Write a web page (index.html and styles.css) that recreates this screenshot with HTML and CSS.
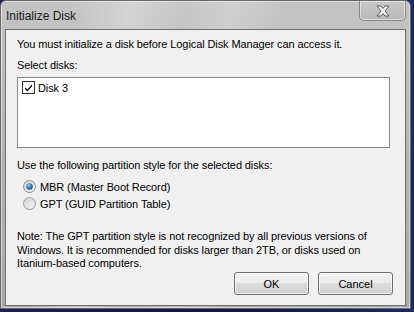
FILE: index.html
```html
<!DOCTYPE html>
<html>
<head>
<meta charset="utf-8">
<link rel="stylesheet" href="styles.css">
</head>
<body>
<div class="window">
  <div class="titlebar">
    <span class="title">Initialize Disk</span>
    <div class="close">
      <svg width="20" height="14" viewBox="0 0 20 14">
        <path d="M4 2 L8 2 L10 4.5 L12 2 L16 2 L12 7 L16 12 L12 12 L10 9.5 L8 12 L4 12 L8 7 Z" fill="#f4f4f4" stroke="#5a5a5a" stroke-width="1" stroke-linejoin="round"/>
      </svg>
    </div>
  </div>
  <div class="client">
    <p class="intro">You must initialize a disk before Logical Disk Manager can access it.</p>
    <p class="label">Select disks:</p>
    <div class="listbox">
      <div class="item">
        <svg class="check" width="13" height="13" viewBox="0 0 13 13">
          <rect x="0.5" y="0.5" width="12" height="12" fill="#fff" stroke="#333"/>
          <path d="M3 6.2 L5.3 8.6 L10 3.4 L10 5.4 L5.3 10.6 L3 8.2 Z" fill="#111"/>
        </svg>
        <span>Disk 3</span>
      </div>
    </div>
    <p class="label style">Use the following partition style for the selected disks:</p>
    <div class="radios">
      <div class="radio">
        <svg width="13" height="13" viewBox="0 0 13 13">
          <defs>
            <radialGradient id="dot" cx="0.4" cy="0.35" r="0.7">
              <stop offset="0" stop-color="#9fd3f5"/>
              <stop offset="0.6" stop-color="#2a74b4"/>
              <stop offset="1" stop-color="#163f6a"/>
            </radialGradient>
            <linearGradient id="ring" x1="0" y1="0" x2="1" y2="1">
              <stop offset="0" stop-color="#d6d6d6"/>
              <stop offset="1" stop-color="#f6f6f6"/>
            </linearGradient>
          </defs>
          <circle cx="6.5" cy="6.5" r="6" fill="url(#ring)" stroke="#8c8c8c"/>
          <circle cx="6.5" cy="6.5" r="3.3" fill="url(#dot)"/>
        </svg>
        <span>MBR (Master Boot Record)</span>
      </div>
      <div class="radio">
        <svg width="13" height="13" viewBox="0 0 13 13">
          <defs>
            <linearGradient id="ring2" x1="0" y1="0" x2="1" y2="1">
              <stop offset="0" stop-color="#d2d2d2"/>
              <stop offset="1" stop-color="#f4f4f4"/>
            </linearGradient>
          </defs>
          <circle cx="6.5" cy="6.5" r="6" fill="url(#ring2)" stroke="#9a9a9a"/>
        </svg>
        <span>GPT (GUID Partition Table)</span>
      </div>
    </div>
    <p class="note">Note: The GPT partition style is not recognized by all previous versions of Windows. It is recommended for disks larger than 2TB, or disks used on Itanium-based computers.</p>
    <div class="buttons">
      <button class="btn">OK</button>
      <button class="btn">Cancel</button>
    </div>
  </div>
</div>
</body>
</html>
```
FILE: styles.css
```css
* { box-sizing: border-box; }
html, body { margin: 0; padding: 0; }
body {
  width: 414px;
  height: 312px;
  background: linear-gradient(90deg, #1b1f5e, #101347 60%, #1a2a70);
  overflow: hidden;
  font-family: "Liberation Sans", Arial, sans-serif;
  font-size: 11px;
  letter-spacing: -0.1px;
  color: #000;
}
.window {
  width: 411px;
  height: 309px;
  border: 1px solid #6a6a6a;
  border-radius: 6px 6px 0 0;
  background:
    linear-gradient(100deg, rgba(255,255,255,0) 15%, rgba(255,255,255,0.28) 28%, rgba(255,255,255,0.05) 40%, rgba(255,255,255,0.22) 50%, rgba(255,255,255,0) 62%),
    linear-gradient(180deg, #c4c4c4 0%, #b6b6b6 40%, #a8a8a8 100%);
  display: flex;
  flex-direction: column;
  box-shadow: inset 0 0 0 1px rgba(255,255,255,0.45);
}
.titlebar {
  height: 28px;
  display: flex;
  align-items: flex-start;
  padding-left: 5px;
}
.title {
  font-size: 12px;
  letter-spacing: 0;
  line-height: 14px;
  margin-top: 8px;
  color: #1a1a1a;
}
.close {
  margin-left: auto;
  margin-right: 4px;
  width: 47px;
  height: 20px;
  border: 1px solid #8a8a8a;
  border-top: none;
  border-radius: 0 0 5px 5px;
  background: linear-gradient(180deg, #c8c8c8, #b9b9b9);
  box-shadow: inset 0 0 0 1px rgba(255,255,255,0.5);
  display: flex;
  align-items: center;
  justify-content: center;
}
.client {
  flex: 1;
  margin: 0 4px 2px 4px;
  border: 1px solid #707070;
  background: #f0f0f0;
  padding: 7px 12px 0 11px;
  display: flex;
  flex-direction: column;
}
p { margin: 0; line-height: 15px; }
.label { margin-top: 6px; }
.listbox {
  margin-top: 4px;
  height: 71px;
  width: 373px;
  background: #fff;
  border: 1px solid #828790;
  padding: 2px 0 0 4px;
}
.item {
  display: flex;
  align-items: center;
  height: 15px;
  gap: 3px;
}
.check { flex: none; }
.style { margin-top: 10px; }
.radios {
  margin-top: 5px;
  padding-left: 6px;
  display: flex;
  flex-direction: column;
}
.radio {
  display: flex;
  align-items: center;
  gap: 4px;
  height: 17px;
}
.radio svg { flex: none; }
.note {
  margin-top: 18px;
  line-height: 13.5px;
  width: 360px;
}
.buttons {
  margin-top: auto;
  margin-bottom: 10px;
  display: flex;
  justify-content: flex-end;
  gap: 9px;
}
.btn {
  width: 75px;
  height: 23px;
  font-family: inherit;
  font-size: 11px;
  letter-spacing: 0;
  color: #000;
  border: 1px solid #707070;
  border-radius: 3px;
  background: linear-gradient(180deg, #f2f2f2 0%, #ebebeb 49%, #dddddd 50%, #cfcfcf 100%);
  box-shadow: inset 0 0 0 1px rgba(255,255,255,0.7);
  padding: 0;
}
```
